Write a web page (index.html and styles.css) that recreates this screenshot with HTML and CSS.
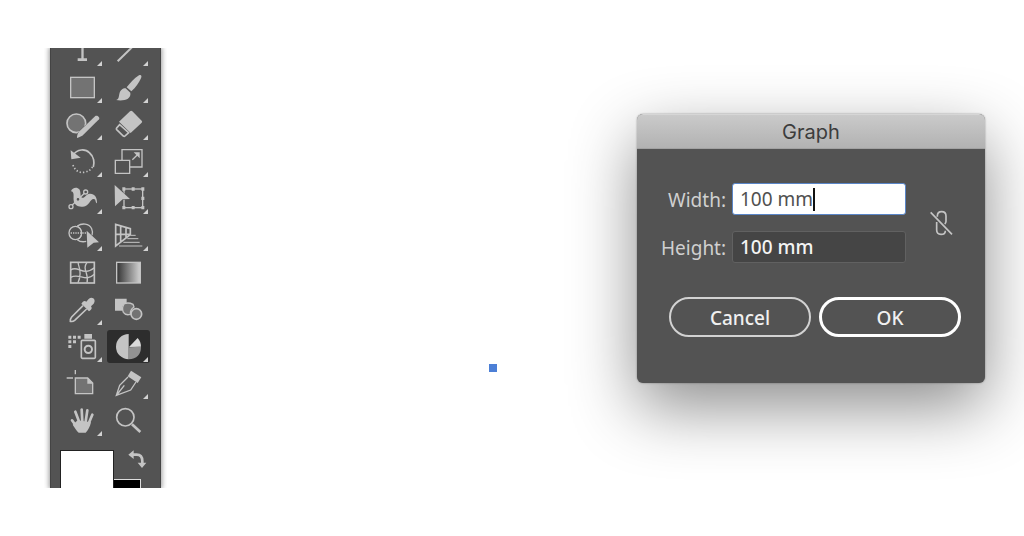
FILE: index.html
```html
<!DOCTYPE html>
<html lang="en">
<head>
<meta charset="utf-8">
<meta name="viewport" content="width=device-width, initial-scale=1">
<title>Graph</title>
<link rel="stylesheet" href="styles.css">
</head>
<body>
<main class="workspace">
  <aside class="dock">
    <div class="toolbar">
      <div class="tools" role="toolbar" aria-label="Tools">
        <button class="tool has-more" aria-label="Type"><svg viewBox="63 -18 129 99"><path class="fill" d="M124 -10h7v65h10v8h-28v-8h11z"/></svg></button>
        <button class="tool has-more" aria-label="Line"><svg viewBox="201 -18 129 99"><path class="line w6" d="M233 64L298 0"/></svg></button>

        <button class="tool has-more" aria-label="Rectangle"><svg viewBox="63 93 129 99"><rect class="shade w4" x="92" y="112" width="71" height="61"/></svg></button>
        <button class="tool has-more" aria-label="Paintbrush"><svg viewBox="201 93 129 99"><path class="fill" d="M297 106c7-3 9 3 6 9-7 14-15 27-29 39l-14-12c11-13 22-27 37-36zM257 145l14 13c3 20-20 26-43 22 8-2 8-8 10-18 2-12 12-18 19-17z"/></svg></button>

        <button class="tool has-more" aria-label="Shaper"><svg viewBox="63 204 129 99"><circle class="shade w5" cx="109" cy="250" r="28"/><path class="fill edge" d="M166 228c5-4 15 4 11 10l-50 49-15 7c-3-1 1-13 4-18z"/></svg></button>
        <button class="tool has-more" aria-label="Eraser"><svg viewBox="201 204 129 99"><path class="fill" d="M270 214q4-3 7 0l28 28q3 3 0 6l-33 31-35-34z"/><path class="line w5" d="M239 254l-9 10q-2 3 0 5l20 19q3 2 5 0l11-10z"/></svg></button>

        <button class="tool has-more" aria-label="Rotate"><svg viewBox="63 0 129 99"><path class="line w5" d="M98 31C112 12 135 10 149 24c13 11 15 29 11 42"/><path class="fill" d="M92 16l2 27 28-5z"/><path class="line w5 dots" d="M99 60C105 78 119 84 132 82s22-9 26-17"/></svg></button>
        <button class="tool has-more" aria-label="Scale"><svg viewBox="201 0 129 99"><path class="line w4" d="M246 45V14h60v52h-36M226 46h43v39h-43zM277 44l17-16"/><path class="fill" d="M281 22h18v18z"/></svg></button>

        <button class="tool has-more" aria-label="Width"><svg viewBox="63 111 129 99"><path class="fill" d="M93 139c3-11 18-15 25-6 6 9 1 22 8 25 8 3 11-11 23-12 14-1 23 10 22 29-6-2-2-13-10-13-12 0-12 22-32 23-15 2-27-5-28-19-1-12 3-26-8-27z"/><path class="line w4" d="M96 181l39-38"/><circle class="knot" cx="93" cy="185" r="6"/><circle class="knot" cx="137" cy="141" r="6"/><circle class="knot" cx="114" cy="163" r="6"/></svg></button>
        <button class="tool has-more" aria-label="Free Transform"><svg viewBox="201 111 129 99"><rect class="line w4" x="252" y="132" width="56" height="56"/><path class="fill" d="M247 127h9v10h-9zM275 127h9v10h-9zM304 127h9v10h-9zM304 155h9v10h-9zM247 183h9v10h-9zM275 183h9v10h-9zM304 183h9v10h-9z"/><path class="fill edge" d="M224 120l46 42-22 1-23 21z"/></svg></button>

        <button class="tool has-more" aria-label="Shape Builder"><svg viewBox="63 222 129 99"><path class="line w4" d="M112 243c13-9 35-9 43 8 3 7 3 15 1 20M112 284c7 6 19 7 27 5"/><ellipse class="line w4" cx="106" cy="264" rx="19" ry="20"/><path class="line w3" d="M112 243c15 9 17 29 4 40"/><path class="line w4 dots-tight" d="M92 264h47"/><path class="fill edge" d="M140 257l37 35-16 1-19 15z"/></svg></button>
        <button class="tool has-more" aria-label="Perspective Grid"><svg viewBox="201 222 129 99"><path class="line w5" d="M227 238v65l44-34v-18zM227 268h43M242 244v48M258 248v30"/><path class="line w3" d="M271 271h16M262 281h33M250 292h49M237 303h70"/></svg></button>

        <button class="tool" aria-label="Mesh"><svg viewBox="63 18 129 99"><rect class="line w5" x="92" y="37" width="71" height="62"/><path class="line w4" d="M115 37c-4 11 16 22-1 61M141 37c-16 22 7 32 0 61M92 60c23-17 35 22 71-7M92 82c26-14 45 16 71-9"/></svg></button>
        <button class="tool" aria-label="Gradient"><svg viewBox="201 18 129 99"><defs><linearGradient id="ramp"><stop offset="0" stop-color="#333"/><stop offset="1" stop-color="#d2d2d2"/></linearGradient></defs><rect fill="url(#ramp)" x="230" y="37" width="71" height="62"/><rect class="line w4" x="230" y="37" width="71" height="62"/></svg></button>

        <button class="tool has-more" aria-label="Eyedropper"><svg viewBox="63 129 129 99"><path class="line w5" d="M129 167l-34 34q-5 6-4 13 7 2 13-3l36-34"/><path class="fill" d="M128 156c4-4 8-3 11-1l7-8c10-10 24 1 15 14l-8 8c3 4 3 8-1 11l-5 4-23-23z"/></svg></button>
        <button class="tool" aria-label="Blend"><svg viewBox="201 129 129 99"><path class="fill" d="M225 146h35v12q-15 5-14 24h-21z"/><path class="shade w4" d="M253 161q13-5 26 2l3 8q-12 8-11 22-14 4-21-6-6-14 3-26z"/><circle class="shade w5" cx="289" cy="192" r="16"/></svg></button>

        <button class="tool has-more" aria-label="Symbol Sprayer"><svg viewBox="63 240 129 99"><path class="fill" d="M133 252h23v14h-23zM85 257h9v9h-9zM99 257h9v9h-9zM113 257h9v9h-9zM85 271h9v9h-9zM99 271h9v9h-9zM85 285h9v9h-9z"/><rect class="line w5" x="124" y="271" width="42" height="54" rx="3"/><circle class="line w6" cx="145" cy="298" r="11"/></svg></button>
        <button class="tool has-more is-active" aria-label="Pie Graph" aria-pressed="true"><svg viewBox="201 240 129 99"><path class="fill" d="M266 252v76a38 38 0 0 1 0-76z"/><path class="fill bright" d="M267 291l26-27q10 11 10 26z"/><path class="mid" d="M266 292l37-2q0 35-37 38z"/></svg></button>

        <button class="tool" aria-label="Artboard"><svg viewBox="63 6 129 99"><path class="line w4" d="M106 15v13M80 39h19"/><path class="shade w4" d="M106 39h37l15 15v32h-52z"/><path class="fill" d="M142 38v18h18z"/></svg></button>
        <button class="tool has-more" aria-label="Slice"><svg viewBox="201 6 129 99"><path class="fill" d="M273 17l31 20-11 17-30-20z"/><path class="line w4" d="M264 36L239 61 229 91l43-16 16-24M230 90l23-29"/></svg></button>

        <button class="tool has-more" aria-label="Hand"><svg viewBox="63 117 129 99"><path class="line w8 round" d="M118 172l-12-32M127 170l-2-36M137 170l5-34M145 178l12-29M113 190l-17-24"/><path class="fill" d="M113 166l40 6c-3 14-9 24-16 31h-21c-6-5-12-15-18-24z"/></svg></button>
        <button class="tool" aria-label="Zoom"><svg viewBox="201 117 129 99"><circle class="line w5" cx="256" cy="157" r="26"/><path class="line w8" d="M276 178l25 23"/></svg></button>
      </div>

      <div class="colors">
        <button class="swatch swatch-fill" aria-label="Fill"></button>
        <div class="color-side">
          <button class="swap" aria-label="Swap fill and stroke"><svg viewBox="264 258 57 57"><path class="line w8" d="M279 272h11q17 0 17 20v6"/><path class="fill" d="M265 272l16-13v26zM293 296h26l-13 16z"/></svg></button>
          <button class="swatch swatch-stroke" aria-label="Stroke"></button>
        </div>
      </div>
    </div>
  </aside>

  <section class="canvas" aria-label="Canvas"><span class="anchor"></span></section>

  <form class="dialog" role="dialog" aria-labelledby="dialog-title">
    <h1 class="titlebar" id="dialog-title">Graph</h1>
    <div class="dialog-body">
      <div class="size">
        <div class="fields">
          <label for="width">Width:</label>
          <div class="field is-focused"><input id="width" type="text" value="100 mm"><span class="caret"></span></div>
          <label for="height">Height:</label>
          <div class="field"><input id="height" type="text" value="100 mm"></div>
        </div>
        <button class="link" type="button" aria-label="Constrain proportions"><svg viewBox="345 330 69 78"><path class="line w5" d="M367 350v-2q0-13 13-13t13 13v16q0 5-4 8M365 366v24q0 13 13 13t13-11M347 337l64 66"/></svg></button>
      </div>
      <div class="actions">
        <button class="action" type="button">Cancel</button>
        <button class="action is-default" type="submit">OK</button>
      </div>
    </div>
  </form>
</main>
</body>
</html>
```
FILE: styles.css
```css
* { box-sizing: border-box; }

body {
  margin: 0;
  background: #fff;
  font-family: "Noto Sans", "Open Sans", sans-serif;
  overflow: hidden;
}

button {
  padding: 0;
  border: 0;
  background: none;
  color: inherit;
  font: inherit;
}

svg { display: block; width: 100%; height: 100%; }

.workspace {
  display: flex;
  min-height: 100vh;
  padding: 48px 39px 48px 44px;
}

/* Tool dock */
.dock {
  display: flex;
  height: calc(100vh - 96px);
  padding: 0 6px;
  overflow: hidden;
}

.toolbar {
  padding: 0 10px;
  border: solid #444;
  border-width: 0 1px;
  background: #535353;
  box-shadow: 0 0 5px 1px rgba(0, 0, 0, .4);
}

.tools {
  display: grid;
  grid-template-columns: 43px 43px;
  grid-auto-rows: 33px;
  gap: 4px 3px;
  margin-top: -14px;
}

.tool { position: relative; border-radius: 3px; }
.tool.is-active { background: #2d2d2d; }

.has-more::after {
  content: "";
  position: absolute;
  right: 2px;
  bottom: 1px;
  width: 5px;
  height: 5px;
  background: #d2d2d2;
  clip-path: polygon(100% 0, 100% 100%, 0 100%);
}

.fill { fill: #c4c4c4; }
.bright { fill: #dadada; }
.mid { fill: #929292; }
.edge { stroke: #535353; stroke-width: 3; paint-order: stroke; }
.line { fill: none; stroke: #c4c4c4; }
.shade { fill: #737373; stroke: #c4c4c4; }
.knot { fill: #535353; stroke: #c4c4c4; stroke-width: 4; }
.round { stroke-linecap: round; }
.w3 { stroke-width: 3; }
.w4 { stroke-width: 4; }
.w5 { stroke-width: 5; }
.w6 { stroke-width: 6; }
.w8 { stroke-width: 8; }
.dots { stroke-dasharray: 4 6; }
.dots-tight { stroke-dasharray: 4 3; }

.colors { display: flex; margin: 13px -1px 0; }
.swatch-fill {
  width: 54px;
  height: 54px;
  border: 1px solid #222;
  background: #fff;
}
.color-side { display: flex; flex-direction: column; gap: 10px; }
.swap { width: 19px; height: 19px; margin-left: 14px; }
.swatch-stroke {
  width: 27px;
  height: 27px;
  border: solid #ddd;
  border-width: 1px 1px 1px 0;
  background: #000;
}

/* Canvas */
.canvas { position: relative; flex: 1; }
.anchor {
  position: absolute;
  left: calc(69% - 2px);
  top: 316px;
  width: 8px;
  height: 8px;
  background: #4c7fd6;
}

/* Dialog */
.dialog {
  align-self: flex-start;
  width: 348px;
  margin-top: 66px;
  border-radius: 6px;
  background: #535353;
  box-shadow: 0 0 2px rgba(0, 0, 0, .4), 0 24px 66px rgba(0, 0, 0, .45);
}

.titlebar {
  margin: 0;
  padding-top: 2px;
  border-top: 1px solid #d6d6d6;
  border-bottom: 1px solid #a2a2a2;
  border-radius: 6px 6px 0 0;
  background: linear-gradient(#cacaca, #b2b2b2);
  color: #3c3c3c;
  font: 400 20px/31px Inter, Roboto, sans-serif;
  text-align: center;
}

.dialog-body { padding: 34px 24px 46px 24px; }

.size { display: flex; align-items: center; gap: 24px; padding-right: 8px; }

.fields {
  display: grid;
  flex: 1;
  grid-template-columns: 65px 1fr;
  grid-auto-rows: 32px;
  gap: 16px 6px;
  color: #d0d0d0;
  font-size: 19px;
  line-height: 34px;
  text-align: right;
  white-space: nowrap;
}

.field { position: relative; height: 32px; }

.field input {
  display: block;
  width: 100%;
  height: 32px;
  padding: 0 7px;
  border: 1px solid #616161;
  border-radius: 3px;
  background: #454545;
  color: #f4f4f4;
  font: 500 19px/30px "Noto Sans", "Open Sans", sans-serif;
}

.field.is-focused input {
  border-color: #5a86c8;
  background: #fff;
  color: #505050;
  font-weight: 400;
}

.caret {
  position: absolute;
  left: 81px;
  top: 5px;
  width: 2px;
  height: 23px;
  background: #111;
}

.link { width: 23px; height: 26px; }

.actions { display: flex; justify-content: flex-end; gap: 8px; margin-top: 34px; }

.action {
  width: 142px;
  height: 40px;
  padding-top: 1px;
  border: 2px solid #d2d2d2;
  border-radius: 20px;
  color: #f0f0f0;
  font-size: 19px;
  font-weight: 500;
  line-height: 34px;
}
.action.is-default { border: 3px solid #fff; }
```
